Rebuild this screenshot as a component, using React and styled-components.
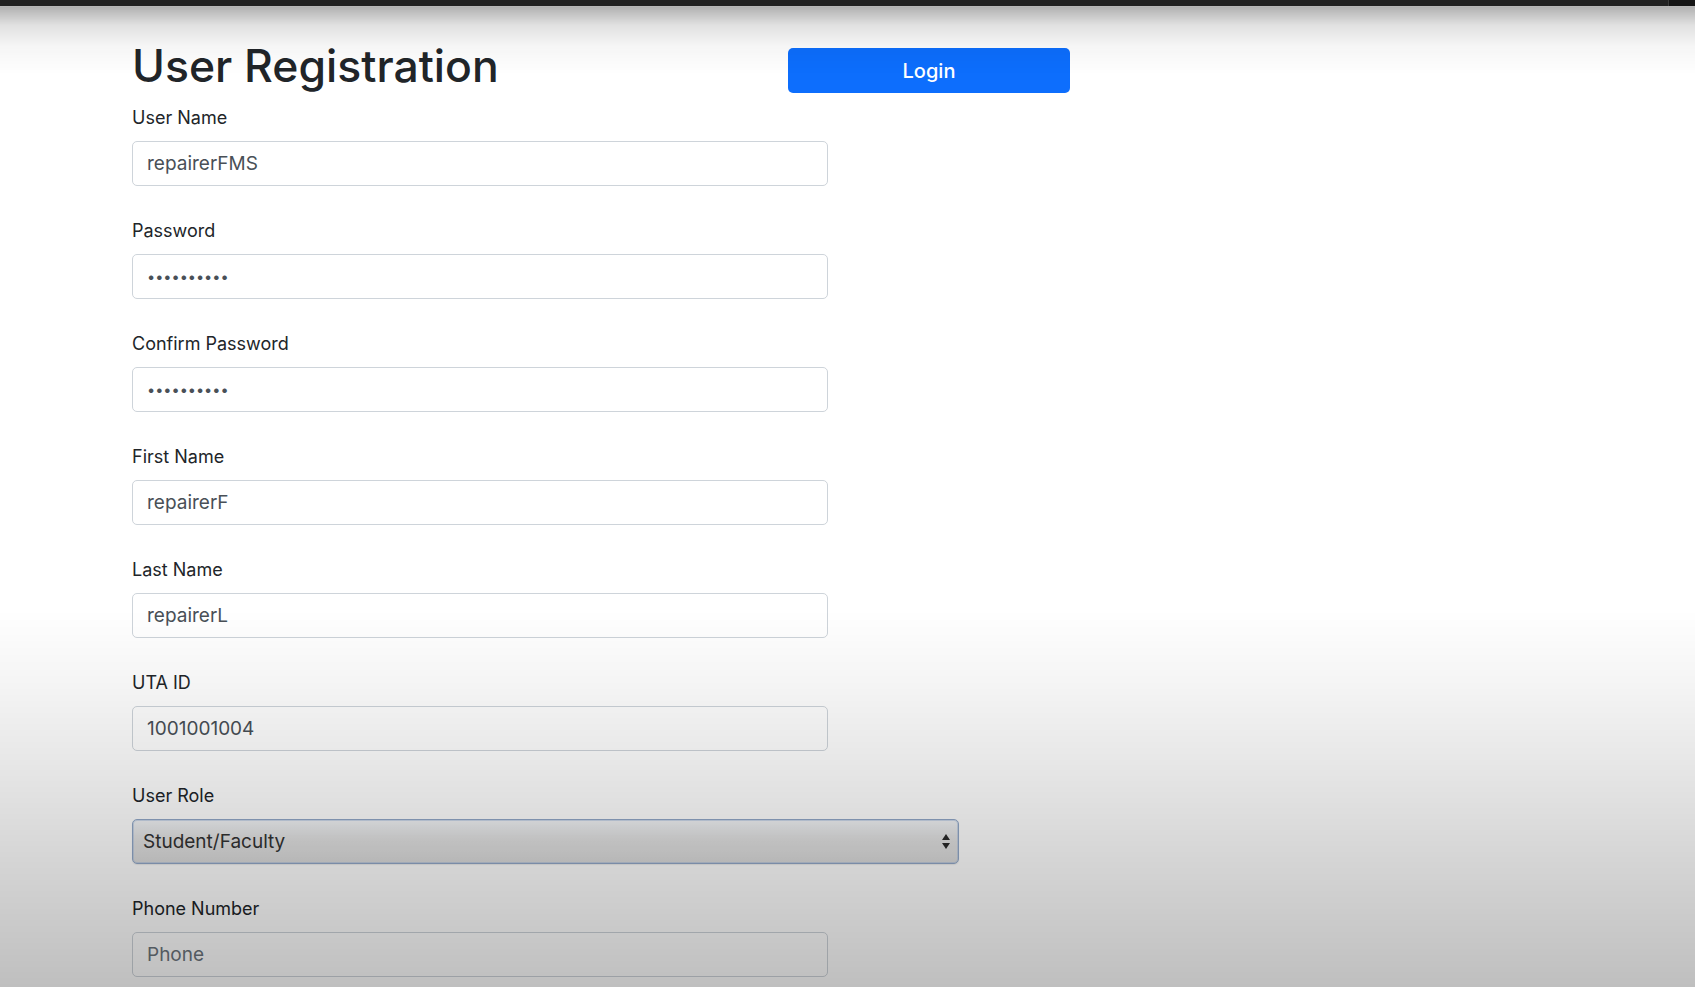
import React from 'react'
import styled, { createGlobalStyle } from 'styled-components'

const GlobalStyle = createGlobalStyle`
    html, body {
        margin : 0;
        padding : 0;
        background : #ffffff;
        font-family : Inter, "Liberation Sans", Arial, sans-serif;
    }
    * {
        box-sizing : border-box;
    }
`

const Page = styled.div`
    min-height : 100vh;
    position : relative;
    background : #ffffff;
    overflow : hidden;
    &::after {
        content : '';
        position : fixed;
        inset : 0;
        pointer-events : none;
        background : linear-gradient(
            to bottom,
            rgba(0, 0, 0, 0) 0px,
            rgba(0, 0, 0, 0.3) 7px,
            rgba(0, 0, 0, 0.12) 25px,
            rgba(0, 0, 0, 0.04) 45px,
            rgba(0, 0, 0, 0) 75px,
            rgba(0, 0, 0, 0) 610px,
            rgba(0, 0, 0, 0.04) 680px,
            rgba(0, 0, 0, 0.09) 757px,
            rgba(0, 0, 0, 0.17) 865px,
            rgba(0, 0, 0, 0.25) 987px
        );
    }
`

const TopBar = styled.div`
    height : 6px;
    background : #222222;
    display : flex;
    justify-content : flex-end;
    position : relative;
    z-index : 2;
`

const BarEnd = styled.div`
    width : 27px;
    background : #141414;
    border-left : 1px solid #3a3a3a;
`

const Container = styled.main`
    padding : 42px 0 0 132px;
`

const Header = styled.div`
    display : grid;
    grid-template-columns : 656px 282px;
    align-items : start;
`

const Title = styled.h1`
    margin : -8px 0 0 0;
    font-size : 44.5px;
    line-height : 52px;
    font-weight : 500;
    color : #212529;
`

const LoginBtn = styled.button`
    height : 45px;
    border : none;
    border-radius : 5px;
    background : #0d6efd;
    color : #ffffff;
    font-family : inherit;
    font-size : 20px;
    font-weight : 500;
    cursor : pointer;
`

const Form = styled.form`
    margin-top : 11px;
    display : flex;
    flex-direction : column;
    gap : 31px;
`

const Field = styled.div`
    display : flex;
    flex-direction : column;
    align-items : flex-start;
`

const Label = styled.label`
    font-size : 18px;
    line-height : 27px;
    color : #212529;
    margin-bottom : 10px;
`

const Input = styled.input`
    width : 696px;
    height : 45px;
    padding : 0 14px;
    border : 1px solid #ced4da;
    border-radius : 5px;
    background : #ffffff;
    color : #495057;
    font-family : inherit;
    font-size : 19px;
    outline : none;
    &::placeholder {
        color : #6c757d;
    }
    &[type='password'] {
        font-size : 14.5px;
        letter-spacing : 0;
    }
`

const SelectWrap = styled.div`
    position : relative;
    width : 827px;
`

const Select = styled.select`
    width : 100%;
    height : 45px;
    padding : 0 10px;
    appearance : none;
    border : 1px solid #93a9c9;
    border-radius : 5px;
    background : linear-gradient(to bottom, #f2f4f7 0%, #e3e3e3 45%, #dcdcdc 100%);
    box-shadow : inset 0 0 0 1px rgba(160, 185, 220, 0.45), 0 1px 1px rgba(0, 0, 0, 0.08);
    color : #333333;
    font-family : inherit;
    font-size : 19px;
    outline : none;
`

const Arrows = styled.svg`
    position : absolute;
    right : 8px;
    top : 14px;
    pointer-events : none;
`

const fields = [
    { label : 'User Name', type : 'text', value : 'repairerFMS' },
    { label : 'Password', type : 'password', value : 'repairerFM' },
    { label : 'Confirm Password', type : 'password', value : 'repairerFM' },
    { label : 'First Name', type : 'text', value : 'repairerF' },
    { label : 'Last Name', type : 'text', value : 'repairerL' },
    { label : 'UTA ID', type : 'text', value : '1001001004' },
]

function App() {
    return (
        <Page>
            <GlobalStyle />
            <TopBar><BarEnd /></TopBar>
            <Container>
                <Header>
                    <Title>User Registration</Title>
                    <LoginBtn type="button">Login</LoginBtn>
                </Header>

                <Form onSubmit={e => e.preventDefault()}>
                    {fields.map(f => (
                        <Field key={f.label}>
                            <Label>{f.label}</Label>
                            <Input type={f.type} defaultValue={f.value} />
                        </Field>
                    ))}

                    <Field>
                        <Label>User Role</Label>
                        <SelectWrap>
                            <Select defaultValue="student">
                                <option value="student">Student/Faculty</option>
                                <option value="repairer">Repairer</option>
                                <option value="manager">Facility Manager</option>
                            </Select>
                            <Arrows width="10" height="17" viewBox="0 0 10 17">
                                <path d="M5 1 L9 7 L1 7 Z" fill="#2b2b2b" />
                                <path d="M1 10 L9 10 L5 16 Z" fill="#2b2b2b" />
                            </Arrows>
                        </SelectWrap>
                    </Field>

                    <Field>
                        <Label>Phone Number</Label>
                        <Input type="text" placeholder="Phone" />
                    </Field>
                </Form>
            </Container>
        </Page>
    )
}

export default App
